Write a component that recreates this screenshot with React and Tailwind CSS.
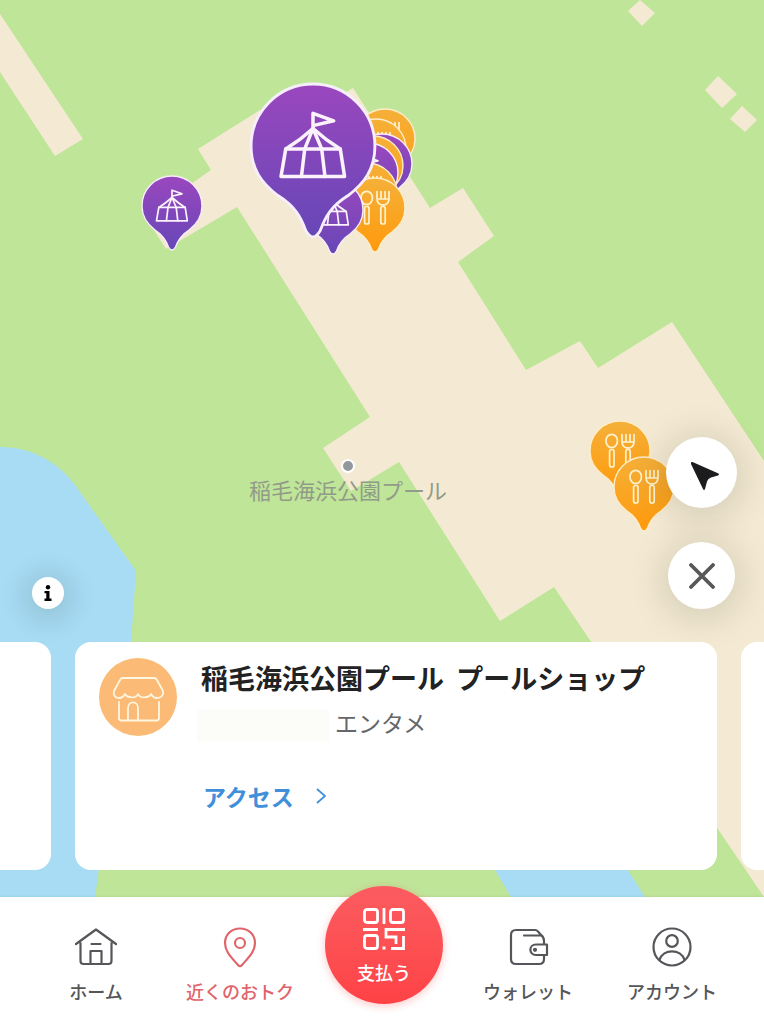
const pins = [
  { id: 'food-1', kind: 'food', place: 'left-[354px] top-[108px] w-[62px]' },
  { id: 'food-2', kind: 'food', place: 'left-[345px] top-[118px] w-[62px]' },
  { id: 'tent-1', kind: 'tent', place: 'left-[351px] top-[133px] w-[62px]' },
  { id: 'food-3', kind: 'food', place: 'left-[342px] top-[135px] w-[62px]' },
  { id: 'tent-2', kind: 'tent', place: 'left-[337px] top-[142px] w-[62px]' },
  { id: 'food-4', kind: 'food', place: 'left-[336px] top-[162px] w-[62px]' },
  { id: 'food-5', kind: 'food', place: 'left-[344px] top-[177px] w-[62px]' },
  { id: 'tent-3', kind: 'tent', place: 'left-[302px] top-[179px] w-[62px]' },
  { id: 'tent-4', kind: 'tent', place: 'left-[141px] top-[175px] w-[62px]' },
  { id: 'tent-5', kind: 'tent', place: 'left-[249px] top-[82px] w-[128px]' },
  { id: 'food-6', kind: 'food', place: 'left-[589px] top-[420px] w-[62px]' },
  { id: 'food-7', kind: 'food', place: 'left-[613px] top-[456px] w-[62px]' },
];

const PIN_PATH =
  'M31 1A30 30 0 0 1 61 31C61 42 56 49 48 55C40 60 37 65 34.5 72Q31 78 27.5 72C25 65 22 60 14 55C6 49 1 42 1 31A30 30 0 0 1 31 1Z';

function TentMark() {
  return (
    <g fill="none" stroke="#fbf2fc" strokeWidth="1.7" strokeLinejoin="round" strokeLinecap="round">
      <path d="M15.5 45.8L17.8 32.4H44.2L46.3 45.8Z" />
      <path d="M17.8 32.4Q25 28 31 22.5Q37 28 44.2 32.4" />
      <path d="M31 22.5L27 32.4L25.4 45.8M31 22.5L35.2 32.4L36.8 45.8" />
      <path d="M31 22.5V15.2L41 18.8L31.5 21" />
    </g>
  );
}

function FoodMark() {
  return (
    <g fill="none" stroke="#fff3cf" strokeWidth="1.7" strokeLinejoin="round" strokeLinecap="round">
      <path d="M20.8 27.4C18.5 26 17 23.5 17 20.8C17 17 19.5 14.3 22.7 14.3S28.4 17 28.4 20.8C28.4 23.5 27 26 24.6 27.4Z" />
      <rect x="20.6" y="29.5" width="4.4" height="17.5" rx="2" />
      <path d="M33 14.5V21Q33 26.5 37 27.8H41Q45 26.5 45 21V14.5" />
      <path d="M37 14.5V21M41 14.5V21M33.5 22H44.5" />
      <rect x="36.8" y="29.5" width="4.4" height="17.5" rx="2" />
    </g>
  );
}

function Pin({ kind, place }) {
  const tent = kind === 'tent';
  return (
    <button type="button" aria-label={tent ? 'エンタメ' : 'グルメ'} className={`absolute ${place}`}>
      <svg viewBox="0 0 62 76" className="block w-full">
        <path
          d={PIN_PATH}
          fill={tent ? 'url(#pin-purple)' : 'url(#pin-orange)'}
          stroke={tent ? '#f6eefb' : '#ffedc8'}
          strokeWidth="1.4"
        />
        {tent ? <TentMark /> : <FoodMark />}
      </svg>
    </button>
  );
}

function MapCanvas() {
  return (
    <svg
      viewBox="0 0 764 897"
      preserveAspectRatio="xMidYMid slice"
      className="absolute inset-0 h-full w-full"
      aria-hidden="true"
    >
      <defs>
        <linearGradient id="pin-purple" x1="0" y1="0" x2="0" y2="1">
          <stop offset="0" stopColor="#9b47be" />
          <stop offset="1" stopColor="#6647b7" />
        </linearGradient>
        <linearGradient id="pin-orange" x1="0" y1="0" x2="0" y2="1">
          <stop offset="0" stopColor="#f5b039" />
          <stop offset="1" stopColor="#ff9a0c" />
        </linearGradient>
      </defs>
      <rect width="764" height="897" fill="#bfe599" />
      {/* paved areas */}
      <g fill="#f4ead3">
        <path d="M0 14L83 139L55 156L0 72Z" />
        <path d="M628 11L640 0L655 13L642 26Z" />
        <path d="M705 90L718 76L737 94L722 108Z" />
        <path d="M730 119L742 106L757 120L745 132Z" />
        <path d="M198 149L260 110L320 108L353 88L430 208L463 188L494 236L458 262L526 370L580 341L598 368L672 322L764 461V897L554 587L500 621L399 462L351 491L323 448L370 417L237 207L166 249L145 216L211 170Z" />
      </g>
      {/* water */}
      <g fill="#a7dcf4">
        <path d="M0 447C35 447 60 465 75 485L136 571L131 642L95 897H0Z" />
        <path d="M480 845L511 897H645L612 845Z" />
      </g>
    </svg>
  );
}

function ShopIcon() {
  return (
    <svg viewBox="0 0 78 78" className="size-[78px] shrink-0" aria-hidden="true">
      <circle cx="39" cy="39" r="39" fill="#fbba75" />
      <g fill="none" stroke="#fff6e0" strokeWidth="1.8" strokeLinejoin="round" strokeLinecap="round">
        <path d="M24 20H55Q57 20 58 22L64 33C65 37 62 40 58 40C55 40 53 38 52 36C50 40 41 41 39 36C37 41 28 40 26 36C25 38 23 40 20 40C16 40 14 37 15 33L21 22Q22 20 24 20Z" />
        <path d="M20 44V60Q20 62.5 22.5 62.5H57.5Q60 62.5 60 60V44" />
        <path d="M29 62V50C29 42.5 39 42.5 39 50V62" />
      </g>
    </svg>
  );
}

function HomeIcon() {
  return (
    <svg viewBox="0 0 44 44" className="size-11" fill="none" stroke="currentColor" strokeWidth="2.2" strokeLinecap="round" strokeLinejoin="round">
      <path d="M2 19L22 4.5L42 19M6.5 18V36Q6.5 39 9.5 39H34.5Q37.5 39 37.5 36V18M16.5 38.5V26H27.5V38.5M17.5 19H26.5" />
    </svg>
  );
}

function NearbyIcon() {
  return (
    <svg viewBox="0 0 44 44" className="size-11" fill="none" stroke="currentColor" strokeWidth="2.2" strokeLinejoin="round">
      <path d="M22 3.5C13 3.5 7 10 7 18C7 27 14 33 20 40Q22 42.5 24 40C30 33 37 27 37 18C37 10 31 3.5 22 3.5Z" />
      <circle cx="22" cy="18" r="5" />
    </svg>
  );
}

function WalletIcon() {
  return (
    <svg viewBox="0 0 44 44" className="size-11" fill="none" stroke="currentColor" strokeWidth="2.2" strokeLinecap="round" strokeLinejoin="round">
      <path d="M38 19V16Q38 12 35 10L32 6.5Q31 5 29 5H10Q5 5 5 10V34Q5 39 10 39H33Q38 39 38 34V30M18 10.5H35" />
      <path d="M41 19.5H30C22.5 19.5 22.5 30 30 30H41Z" />
      <circle cx="29" cy="24.8" r="1" fill="currentColor" />
    </svg>
  );
}

function AccountIcon() {
  return (
    <svg viewBox="0 0 44 44" className="size-11" fill="none" stroke="currentColor" strokeWidth="2.2">
      <circle cx="22" cy="22" r="18.5" />
      <circle cx="22" cy="16" r="5.8" />
      <path d="M9.5 35C13 23.5 31 23.5 34.5 35" />
    </svg>
  );
}

function QrIcon() {
  return (
    <svg viewBox="0 0 42 42" className="size-[42px]" fill="none" stroke="currentColor" strokeWidth="2.8" aria-hidden="true">
      <rect x="1.5" y="1.5" width="13" height="13" rx="2.500" />
      <rect x="27.5" y="1.5" width="13" height="13" rx="2.500" />
      <rect x="1.5" y="27.5" width="13" height="13" rx="2.500" />
      <path d="M21 0V16M0 21.5H15M19.5 40H22.5M42 21.5H23V29H33V36M40.5 28V40.5H28" />
    </svg>
  );
}

function Tab({ label, icon, active }) {
  return (
    <a
      href="#"
      aria-current={active ? 'page' : undefined}
      className={`flex flex-col items-center pt-7 ${active ? 'text-[#e0646a]' : 'text-[#55565a]'}`}
    >
      {icon}
      <span className="mt-2 text-[18px] leading-7 font-medium whitespace-nowrap">{label}</span>
    </a>
  );
}

function ShopCard() {
  return (
    <article className="flex min-w-0 flex-1 gap-6 rounded-2xl bg-white px-6 pt-4">
      <ShopIcon />
      <div className="min-w-0">
        <h2 className="text-[27px] leading-10 font-bold whitespace-nowrap text-[#222]">
          稲毛海浜公園プール <span className="ml-1.5">プールショップ</span>
        </h2>
        <div className="mt-2 -ml-1 flex h-9 items-start gap-1.5 text-[23px] text-[#66676a]">
          <span className="h-8 w-[132px] self-end bg-[#fcfcf9]" />
          <span className="leading-8">エンタメ</span>
        </div>
        <a href="#" className="mt-[38px] flex items-center gap-[22px] pl-0.5 text-[23px] leading-8 font-bold text-[#3f8fd9]">
          アクセス
          <svg viewBox="0 0 10 16" className="h-4 w-2.5" fill="none" stroke="currentColor" strokeWidth="1.8" aria-hidden="true">
            <path d="M1 1L9 8L1 15" />
          </svg>
        </a>
      </div>
    </article>
  );
}

export default function App() {
  return (
    <div className="flex min-h-screen flex-col bg-white font-['Noto_Sans_CJK_JP',sans-serif]">
      <main className="relative flex flex-1 flex-col justify-end overflow-hidden">
        <MapCanvas />
        {pins.map(pin => <Pin key={pin.id} kind={pin.kind} place={pin.place} />)}

        <div className="absolute top-[459px] left-[249px] flex flex-col items-center">
          <span className="size-3.5 rounded-full border-2 border-white bg-[#93989c]" />
          <span className="text-[22px] leading-8 whitespace-nowrap text-[#929b88]">稲毛海浜公園プール</span>
        </div>

        <div className="relative mb-[33px] flex items-end justify-between pr-[27px] pl-8">
          <button
            type="button"
            aria-label="情報"
            className="flex size-8 items-center justify-center rounded-full bg-white shadow-[0_4px_28px_8px_rgba(0,0,0,0.12)]"
          >
            <svg viewBox="0 0 8 16" className="h-4 w-2" fill="#000">
              <circle cx="4" cy="2.2" r="2.200" />
              <path d="M0.5 6H5.5V13.5H7.5V16H0.5V13.5H2.3V8.3H0.5Z" />
            </svg>
          </button>
          <div className="flex flex-col items-center gap-[34px]">
            <button
              type="button"
              aria-label="現在地"
              className="flex size-[71px] items-center justify-center rounded-full bg-white shadow-[0_4px_36px_6px_rgba(0,0,0,0.13)]"
            >
              <svg viewBox="0 0 38 38" className="size-[38px]" fill="#1c1c1e">
                <path d="M9.5 8L35.500 19.500Q37 20.500 35 21.500L28 23.500Q25 24.500 24 27.500L22 35Q21 37 20 35L8 10Q7.500 7.500 9.500 8Z" />
              </svg>
            </button>
            <button
              type="button"
              aria-label="閉じる"
              className="flex size-[67px] items-center justify-center rounded-full bg-white shadow-[0_4px_36px_6px_rgba(0,0,0,0.13)]"
            >
              <svg viewBox="0 0 26 26" className="size-[26px]" stroke="#58585a" strokeWidth="3.8" strokeLinecap="round">
                <path d="M2 2L24 24M24 2L2 24" />
              </svg>
            </button>
          </div>
        </div>

        <div className="relative mb-[27px] flex h-[228px] gap-6">
          <div className="w-[51px] shrink-0 rounded-r-2xl bg-white" />
          <ShopCard />
          <div className="w-[23px] shrink-0 rounded-l-2xl bg-white" />
        </div>
      </main>

      <nav className="relative grid h-[127px] grid-cols-5 items-start bg-white pr-5 pl-6 shadow-[0_-1px_2px_rgba(0,0,0,0.06)]">
        <Tab label="ホーム" icon={<HomeIcon />} />
        <Tab label="近くのおトク" icon={<NearbyIcon />} active />
        <button
          type="button"
          className="-mt-[11px] flex size-[118px] flex-col items-center justify-self-center rounded-full bg-linear-to-b from-[#fb5c60] to-[#fe4246] pt-[22px] text-white shadow-[0_2px_8px_rgba(254,66,70,0.3)]"
        >
          <QrIcon />
          <span className="mt-2 text-[18px] leading-7 font-medium">支払う</span>
        </button>
        <Tab label="ウォレット" icon={<WalletIcon />} />
        <Tab label="アカウント" icon={<AccountIcon />} />
      </nav>
    </div>
  );
}
